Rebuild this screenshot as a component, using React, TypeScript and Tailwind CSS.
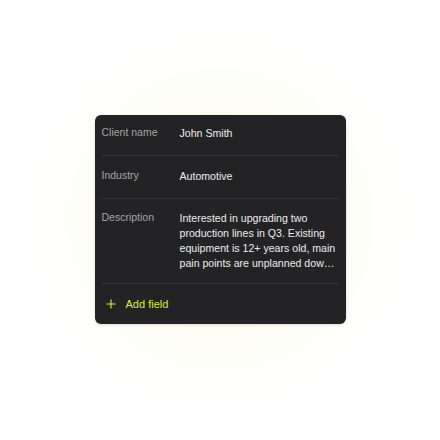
import { Plus } from 'lucide-react';

const fields = [
  { label: 'Client name', value: 'John Smith' },
  { label: 'Industry', value: 'Automotive' },
  {
    label: 'Description',
    value:
      'Interested in upgrading two production lines in Q3. Existing equipment is 12+ years old, main pain points are unplanned dow…',
  },
];

export default function App() {
  return (
    <div
      className="flex h-[440px] w-[440px] items-start justify-center bg-[radial-gradient(circle_at_50%_50%,#fbfce8_0%,#fdfdf4_35%,#ffffff_62%)] pt-[115px]"
      style={{ fontFamily: '"Liberation Sans", Arial, sans-serif' }}
    >
      <div className="w-[251px] rounded-[6px] bg-[#232325] px-[7px] shadow-[0_1px_3px_rgba(0,0,0,0.15)]">
        {fields.map((f, i) => (
          <div
            key={f.label}
            className={`flex border-b border-[#36363a] ${
              i === 0 ? 'pt-[11px] pb-[14px]' : i === 1 ? 'pt-[13px] pb-[13px]' : 'pt-[12px] pb-[11px]'
            }`}
          >
            <div className="w-[78px] shrink-0 -mt-[1px] text-[10.5px] leading-[15px] text-[#a3a3a6]">{f.label}</div>
            <div className="w-[158px] text-[10.6px] leading-[15.3px] text-[#ececee]">{f.value}</div>
          </div>
        ))}
        <div className="flex items-center gap-[8px] pl-[2px] pt-[13px] pb-[12px]">
          <Plus className="h-[14px] w-[14px] text-[#d6f03f]" strokeWidth={2} />
          <span className="text-[11px] leading-[15px] text-[#d6f03f]">Add field</span>
        </div>
      </div>
    </div>
  );
}
